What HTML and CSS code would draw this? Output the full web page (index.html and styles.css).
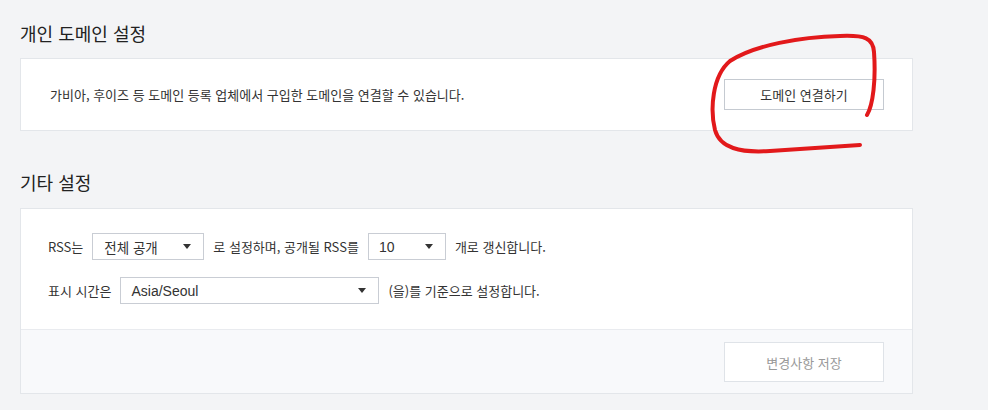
FILE: index.html
```html
<!DOCTYPE html>
<html lang="ko">
<head>
<meta charset="utf-8">
<title>블로그 설정</title>
<link rel="stylesheet" href="styles.css">
</head>
<body>
<main class="page">
  <section class="section">
    <h2 class="section-title first">개인 도메인 설정</h2>
    <div class="card domain-card">
      <p class="desc">가비아, 후이즈 등 도메인 등록 업체에서 구입한 도메인을 연결할 수 있습니다.</p>
      <button class="btn" type="button">도메인 연결하기</button>
    </div>
  </section>

  <section class="section">
    <h2 class="section-title">기타 설정</h2>
    <div class="card">
      <div class="card-body">
        <div class="row">
          <span class="label">RSS는</span>
          <div class="select sel-open"><span>전체 공개</span><i class="caret"></i></div>
          <span class="label">로 설정하며, 공개될 RSS를</span>
          <div class="select sel-count"><span>10</span><i class="caret"></i></div>
          <span class="label">개로 갱신합니다.</span>
        </div>
        <div class="row">
          <span class="label">표시 시간은</span>
          <div class="select sel-tz"><span>Asia/Seoul</span><i class="caret"></i></div>
          <span class="label">(을)를 기준으로 설정합니다.</span>
        </div>
      </div>
      <div class="card-foot">
        <button class="btn btn-save" type="button">변경사항 저장</button>
      </div>
    </div>
  </section>

  <svg class="scribble" width="190" height="135" viewBox="0 0 190 135" aria-hidden="true">
    <path d="M167 85 C 173 75, 176 50, 174 22 C 173 8, 165 5, 140 6 C 100 7, 55 15, 30 31 C 12 46, 10 80, 15 100 C 20 118, 40 123, 70 121 L 160 115" fill="none" stroke="#e2191b" stroke-width="4" stroke-linecap="round" stroke-linejoin="round"/>
  </svg>
</main>
</body>
</html>
```

FILE: styles.css
```css
* { box-sizing: border-box; }

html, body {
  margin: 0;
  padding: 0;
}

body {
  background: #f3f4f6;
  font-family: "Noto Sans CJK KR", "Noto Sans", sans-serif;
  color: #333;
  font-size: 13px;
}

.page {
  position: relative;
  width: 913px;
  padding: 21px 0 0 20px;
}

.section-title {
  margin: 39px 0 14px;
  font-size: 18px;
  line-height: 24px;
  font-weight: 400;
  color: #222;
}

.section-title.first {
  margin-top: 0;
  margin-bottom: 13px;
}

.card {
  background: #fff;
  border: 1px solid #e3e6ea;
}

.domain-card {
  height: 73px;
  display: flex;
  align-items: center;
  justify-content: space-between;
  padding: 0 28px 0 29px;
}

.desc {
  margin: 0;
  font-size: 13px;
  color: #333;
}

.btn {
  width: 160px;
  height: 31px;
  background: #fff;
  border: 1px solid #c5cad1;
  font-family: inherit;
  font-size: 13px;
  color: #333;
  padding: 0;
}

.card-body {
  padding: 24px 28px 25px 27px;
  display: flex;
  flex-direction: column;
  gap: 17px;
}

.row {
  display: flex;
  align-items: center;
  gap: 9px;
  height: 27px;
}

.label {
  font-size: 13px;
  color: #333;
  white-space: nowrap;
}

.select {
  height: 27px;
  border: 1px solid #c9cdd4;
  background: #fff;
  display: flex;
  align-items: center;
  justify-content: space-between;
  padding: 0 12px 0 10px;
  font-family: "Liberation Sans", "Noto Sans CJK KR", sans-serif;
  font-size: 14px;
  color: #333;
}

.sel-open { width: 112px; font-family: "Noto Sans CJK KR", sans-serif; font-size: 13.5px; padding-left: 11px; }
.sel-count { width: 78px; }
.sel-tz { width: 259px; }

.caret {
  width: 0;
  height: 0;
  border-left: 4px solid transparent;
  border-right: 4px solid transparent;
  border-top: 5px solid #333;
}

.card-foot {
  border-top: 1px solid #e9ebef;
  background: #f8f9fb;
  padding: 12px 28px 11px;
  display: flex;
  justify-content: flex-end;
}

.btn-save {
  height: 40px;
  border-color: #dfe3e8;
  color: #999;
}

.scribble {
  position: absolute;
  left: 700px;
  top: 30px;
  pointer-events: none;
}
```
